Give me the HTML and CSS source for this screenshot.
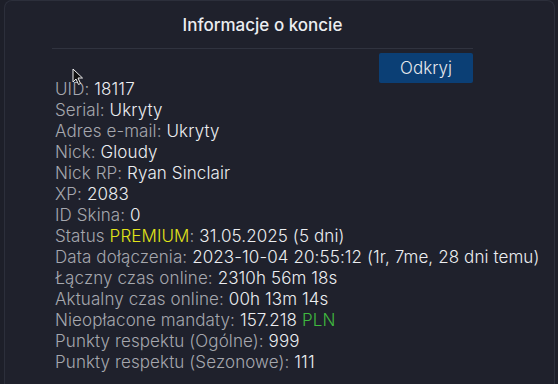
FILE: index.html
```html
<!DOCTYPE html>
<html lang="pl">
<head>
  <meta charset="UTF-8" />
  <title>Informacje o koncie</title>
  <link rel="stylesheet" href="styles.css">
</head>
<body>

  <div class="panel">
    <div class="content">
      <h1 class="title">Informacje o koncie</h1>
      <div class="divider"></div>
      <div class="actions">
        <button class="reveal">Odkryj</button>
      </div>
      <ul class="info">
        <li>UID: <span class="val">18117</span></li>
        <li>Serial: <span class="val">Ukryty</span></li>
        <li>Adres e-mail: <span class="val">Ukryty</span></li>
        <li>Nick: <span class="val">Gloudy</span></li>
        <li>Nick RP: <span class="val">Ryan Sinclair</span></li>
        <li>XP: <span class="val">2083</span></li>
        <li>ID Skina: <span class="val">0</span></li>
        <li>Status <span class="premium">PREMIUM</span>: <span class="val">31.05.2025 (5 dni)</span></li>
        <li>Data dołączenia: <span class="val">2023-10-04 20:55:12 (1r, 7me, 28 dni temu)</span></li>
        <li>Łączny czas online: <span class="val">2310h 56m 18s</span></li>
        <li>Aktualny czas online: <span class="val">00h 13m 14s</span></li>
        <li>Nieopłacone mandaty: <span class="val">157.218</span> <span class="money">PLN</span></li>
        <li>Punkty respektu (Ogólne): <span class="val">999</span></li>
        <li>Punkty respektu (Sezonowe): <span class="val">111</span></li>
      </ul>
    </div>
    <svg class="cursor" width="12" height="18" viewBox="0 0 12 18">
      <path d="M1 1 L1 14 L4 11 L6.5 16.5 L8.5 15.5 L6 10 L10.5 10 Z" fill="#111" stroke="#eee" stroke-width="1"/>
    </svg>
  </div>

</body>
</html>
```

FILE: styles.css
```css
html, body {
  margin: 0;
  background-color: #1d1f29;
  color: #eceef1;
  font-family: Inter, "Noto Sans", sans-serif;
  overflow: hidden;
}

.panel {
  position: relative;
  margin: 0 3px 0 4px;
  height: 400px;
  background: #1f212c;
  border: 1px solid #2c2f3b;
  border-bottom: none;
  border-radius: 8px 8px 0 0;
  box-sizing: border-box;
}

.content {
  width: 421px;
  margin-left: 47px;
}

.title {
  margin: 0;
  padding: 13px 0 12px;
  text-align: center;
  font-size: 17px;
  font-weight: 450;
  line-height: 22px;
}

.divider {
  height: 1px;
  background: #30333f;
}

.actions {
  display: flex;
  justify-content: flex-end;
  padding-top: 4px;
}

.reveal {
  width: 94px;
  height: 30px;
  border: none;
  border-radius: 2px;
  background-color: #0b3f75;
  color: #e6e8ec;
  font-family: inherit;
  font-size: 17px;
  font-weight: 350;
}

.info {
  list-style: none;
  margin: -4px 0 0;
  padding: 0 0 0 3px;
  font-size: 17px;
  font-weight: 350;
  letter-spacing: 0.1px;
  line-height: 21px;
  color: #a5a7ae;
  white-space: nowrap;
}

.val {
  color: #eceef1;
}

.premium {
  color: #e2e419;
}

.money {
  color: #3fb93f;
}

.cursor {
  position: absolute;
  left: 67px;
  top: 67px;
}
```
